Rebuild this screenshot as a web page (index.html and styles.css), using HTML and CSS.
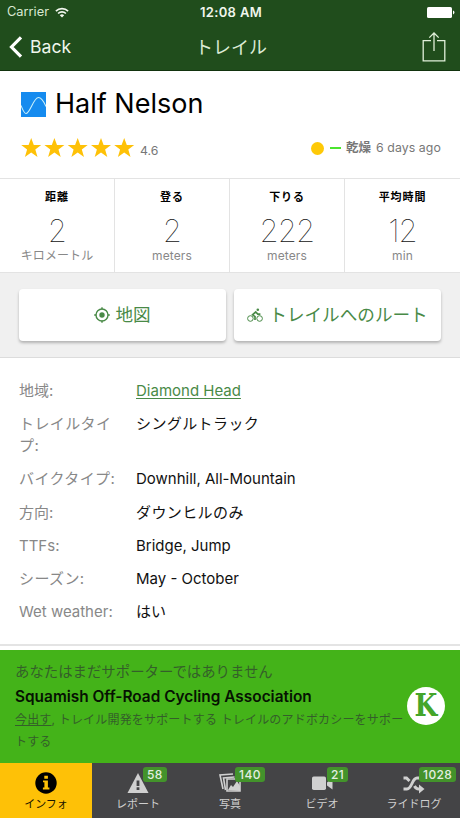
FILE: index.html
```html
<!DOCTYPE html>
<html lang="ja">
<head>
<meta charset="utf-8">
<title>Half Nelson</title>
<link rel="stylesheet" href="styles.css">
</head>
<body>
<header class="top">
  <div class="status">
    <span class="carrier"><span class="carrier-name">Carrier</span>
      <svg width="14" height="11" viewBox="0 0 14 11" fill="none" stroke="#f3f8f0" stroke-width="1.7"><path d="M.9 4.2a8.6 8.6 0 0 1 12.2 0M3.1 6.5a5.5 5.5 0 0 1 7.8 0"/><path d="M7 10.6 4.8 8.3a3.1 3.1 0 0 1 4.4 0z" fill="#f3f8f0" stroke="none"/></svg>
    </span>
    <span class="clock">12:08 AM</span>
    <svg class="battery" width="28" height="11" viewBox="0 0 28 11" fill="#fff"><rect width="25" height="11" rx="1.6"/><path d="M26 3.6c2 .7 2 3.1 0 3.8z"/></svg>
  </div>
  <nav class="nav">
    <span class="back"><svg width="14" height="22" viewBox="0 0 14 22" fill="none" stroke="#fff" stroke-width="3.2"><path d="M12 1.3 2.5 11 12 20.7"/></svg><span class="back-text">Back</span></span>
    <span class="nav-title">トレイル</span>
    <svg class="share" width="24" height="30" viewBox="0 0 24 30" fill="none" stroke="#e0efd9" stroke-width="1.3"><path d="M9 8.6H1.2v20.3h21.6V8.6H15M12 19V1.2M7.3 5.6 12 1l4.7 4.6"/></svg>
  </nav>
</header>
<section class="head">
  <div class="name-row">
    <svg width="25" height="25" viewBox="0 0 25 25"><path fill="#158bef" d="M0 0h25v25H0z"/><path d="M0 13.5C1.5 17 3 21.5 5 21.5c4 0 7.500-16 12.500-16 3.500 0 5.500 4.500 7.500 9" fill="none" stroke="#c9f0fa" stroke-width="1.1"/></svg>
    <h1 class="name">Half Nelson</h1>
  </div>
  <div class="meta">
    <div class="rating">
      <svg width="114" height="20" viewBox="0 0 114 20" fill="#fec107"><defs><path id="star" d="m10.200 0 2.600 7h7.400l-5.900 4.500 2.200 7.500-6.300-4.400L3.900 19l2.200-7.500L.200 7h7.400z"/></defs><use href="#star"/><use href="#star" x="23.200"/><use href="#star" x="46.500"/><use href="#star" x="69.800"/><use href="#star" x="93"/></svg>
      <span class="score">4.6</span>
    </div>
    <div class="condition"><i class="dot"></i><i class="dash"></i><b>乾燥</b><span class="ago">6 days ago</span></div>
  </div>
</section>
<section class="stats">
  <div class="stat"><b class="stat-label">距離</b><span class="num">2</span><span class="unit">キロメートル</span></div>
  <div class="stat"><b class="stat-label">登る</b><span class="num">2</span><span class="unit">meters</span></div>
  <div class="stat"><b class="stat-label">下りる</b><span class="num">222</span><span class="unit">meters</span></div>
  <div class="stat"><b class="stat-label">平均時間</b><span class="num">12</span><span class="unit">min</span></div>
</section>
<section class="actions">
  <a class="btn"><svg width="16" height="16" viewBox="0 0 16 16" fill="none" stroke="#498a47" stroke-width="1.4"><circle cx="8" cy="8" r="6"/><circle cx="8" cy="8" r="2.700" fill="#498a47" stroke="none"/><path d="M8 .2v2M8 13.800v2M.2 8h2M13.800 8h2"/></svg><span>地図</span></a>
  <a class="btn"><svg width="16" height="15" viewBox="0 0 16 15" fill="none" stroke="#498a47"><circle cx="3.400" cy="10.500" r="2.800"/><circle cx="12.600" cy="10.500" r="2.800"/><circle cx="10.800" cy="1.700" r="1.300" fill="#498a47" stroke="none"/><path d="M8 12V8.700L5.600 6.800 8.700 4l2.100 2.200h2.600" stroke-width="1.700"/></svg><span class="route">トレイルへのルート</span></a>
</section>
<dl class="info">
  <dt>地域:</dt><dd><a class="link">Diamond Head</a></dd>
  <dt class="kana">トレイルタイプ:</dt><dd class="kana">シングルトラック</dd>
  <dt class="kana">バイクタイプ:</dt><dd>Downhill, All-Mountain</dd>
  <dt>方向:</dt><dd class="kana">ダウンヒルのみ</dd>
  <dt>TTFs:</dt><dd>Bridge, Jump</dd>
  <dt class="kana">シーズン:</dt><dd>May - October</dd>
  <dt>Wet weather:</dt><dd>はい</dd>
</dl>
<section class="support">
  <div class="support-text">
    <div class="support-lead">あなたはまだサポーターではありません</div>
    <div class="support-org">Squamish Off-Road Cycling Association</div>
    <div class="support-copy"><u>今出す</u>, トレイル開発をサポートする トレイルのアドボカシーをサポー<br>トする</div>
  </div>
  <span class="karma"><span class="karma-letter">K</span></span>
</section>
<nav class="tabs">
  <a class="tab active"><svg width="22" height="22" viewBox="0 0 22 22"><circle cx="11" cy="11" r="10.700"/><path fill="#fec107" d="M9.300 3.700h3.600v3H9.300zM8 8.400h4.900v7.200h1.500v1.900H7.900v-1.900h1.500v-5.300H8z"/></svg><span>インフォ</span></a>
  <a class="tab"><svg width="22" height="22" viewBox="0 0 22 22"><path fill="#d0d0d0" d="M11 1 21.500 21H.5z"/><path fill="#444446" d="M9.600 8.500h2.800v5.500H9.600zM9.600 15.300h2.800v2.700H9.600z"/></svg><span>レポート</span><em class="badge">58</em></a>
  <a class="tab"><svg width="22" height="22" viewBox="0 0 22 22" fill="none" stroke="#d0d0d0" stroke-width="1.600"><path d="m4 17-3-14 13-1"/><path d="m6.500 18-2-12 11-1"/><path d="M8 7h13v12H8z"/><path fill="#d0d0d0" stroke="none" d="m9 18 3-5 2 2 4-6 3 5v5z"/></svg><span>写真</span><em class="badge">140</em></a>
  <a class="tab"><svg width="22" height="22" viewBox="0 0 22 22" fill="#d0d0d0"><rect x="1" y="4.500" width="14" height="13.500" rx="1.700"/><path d="M16 10.500 21.500 6v11.500L16 13.500z"/></svg><span>ビデオ</span><em class="badge">21</em></a>
  <a class="tab"><svg width="22" height="22" viewBox="0 0 22 22" fill="none" stroke="#d0d0d0" stroke-width="3"><path d="M.5 17h3.500c5 0 5-11 10-11h4M.5 6h3l3 3M11.500 14c1.200 2.200 2 3 4 3h3"/><path d="m16 12.500 5.500 4.500-5.500 4.500z" fill="#d0d0d0" stroke="none"/></svg><span>ライドログ</span><em class="badge">1028</em></a>
</nav>
</body>
</html>
```
FILE: styles.css
```css
* { box-sizing: border-box; }
body { margin: 0; width: 460px; height: 818px; overflow: hidden; background: #fff; color: #111; font-family: Inter, "Noto Sans CJK JP", sans-serif; display: flex; flex-direction: column; }
svg { display: block; flex: none; }
.top { height: 71px; flex: none; background: #204d1c; border-bottom: 1px solid #12330e; color: #f0f6ed; }
.status { height: 24px; display: grid; grid-template-columns: 1fr auto 1fr; align-items: center; padding: 0 5px 0 7px; }
.carrier { display: flex; align-items: center; gap: 6px; font-size: 12.8px; line-height: 24px; color: #d9e8d2; }
.clock { font-size: 13px; font-weight: 600; line-height: 24px; letter-spacing: .35px; }
.battery { justify-self: end; }
.nav { height: 46px; display: grid; grid-template-columns: 1fr auto 1fr; align-items: center; padding: 0 14px 0 9px; }
.back { display: flex; align-items: center; gap: 7px; }
.back-text { font-size: 17.6px; line-height: 24px; }
.nav-title { font-size: 18px; line-height: 24px; margin: 1px -7px 0 0; color: #dcebd5; }
.share { justify-self: end; }
.head { height: 107px; flex: none; padding: 16px 19px 0 21px; }
.name-row { display: flex; align-items: center; gap: 9px; height: 34px; }
.name { margin: 0; font-size: 27px; font-weight: 400; line-height: 34px; color: #000; }
.meta { display: flex; justify-content: space-between; align-items: center; height: 20px; margin-top: 17px; }
.rating { display: flex; gap: 5px; color: #777; }
.score { font-size: 12.3px; line-height: 25px; height: 20px; }
.condition { display: flex; align-items: center; font-size: 12.5px; line-height: 20px; color: #777; }
.dot { width: 13px; height: 13px; border-radius: 50%; background: #fec907; margin-right: 6px; }
.dash { width: 11px; height: 2px; background: #4be52f; margin-right: 5px; }
.ago { margin-left: 5px; font-size: 12.3px; letter-spacing: .1px; }
.stats { height: 95px; flex: none; display: grid; grid-template-columns: repeat(4, 1fr); border: solid #e3e3e3; border-width: 1px 0; }
.stat { display: flex; flex-direction: column; align-items: center; padding-top: 10px; border-right: 1px solid #e3e3e3; }
.stat:last-child { border-right: 0; }
.stat-label { font-size: 11px; line-height: 16px; letter-spacing: .9px; color: #000; }
.num { font-size: 31px; line-height: 31px; margin-top: 10px; font-weight: 100; letter-spacing: -1px; color: #111; }
.unit { font-size: 12px; line-height: 16px; margin-top: 2px; color: #888; letter-spacing: .1px; }
.actions { height: 85px; flex: none; display: flex; gap: 8px; padding: 16px 19px; background: #f0f0f0; border-bottom: 1px solid #dcdcdc; }
.btn { flex: 1; height: 52px; display: flex; justify-content: center; align-items: center; gap: 5px; background: #fff; border-radius: 4px; box-shadow: 0 2px 3px rgba(0,0,0,.26); color: #498a47; font-size: 17.6px; line-height: 24px; }
.route { margin-left: 1px; }
.info { margin: 0; height: 286px; flex: none; padding: 22px 19px 0; display: grid; grid-template-columns: 106px 1fr; column-gap: 11px; row-gap: 11.200px; align-content: start; font-size: 15px; line-height: 22px; }
.info dt { color: #888; }
.info dd { margin: 0; color: #111; }
.info .kana { letter-spacing: .4px; }
.link { color: #498a47; text-decoration: underline; text-underline-offset: 2px; }
.support { height: 119px; flex: none; border-top: 2px solid #e4e4e4; box-shadow: inset 0 4px #fff; background: #44b319; padding: 15px 15px 0; display: flex; }
.support-text { flex: 1; min-width: 0; white-space: nowrap; color: #345f2a; }
.support-lead { font-size: 14.400px; line-height: 22px; }
.support-org { margin-top: 2px; font-size: 15.400px; line-height: 24px; font-weight: 600; color: #061202; }
.support-copy { font-size: 12px; line-height: 22px; letter-spacing: .18px; }
.karma { flex: none; width: 38px; height: 38px; margin-top: 26px; border-radius: 50%; background: #fff; color: #44a52b; font: bold 32px/37px "DejaVu Serif", serif; display: flex; justify-content: center; }
.karma-letter { transform: scaleX(.82); }
.tabs { height: 55px; flex: none; display: grid; grid-template-columns: repeat(5, 1fr); background: #444446; }
.tab { position: relative; display: flex; flex-direction: column; align-items: center; padding-top: 9px; color: #cfcfcf; font-size: 11px; line-height: 18px; }
.tab span { margin-top: 1px; }
.active { background: #fec107; color: #181400; }
.badge { position: absolute; top: 4px; left: 51px; height: 15px; padding: 0 4px; border-radius: 3px; background: #43932b; color: #e4eee0; font-size: 12px; line-height: 15px; font-style: normal; font-weight: 500; letter-spacing: .4px; }
```
